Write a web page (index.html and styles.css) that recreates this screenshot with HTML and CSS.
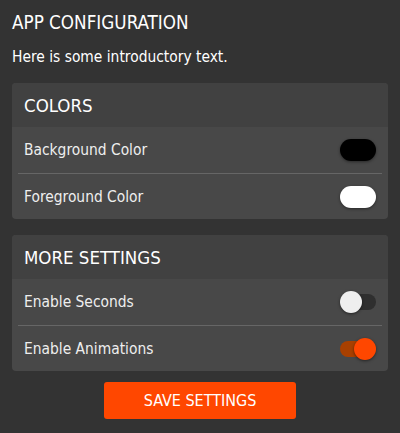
FILE: index.html
```html
<!DOCTYPE html>
<html>
<head>
<meta charset="utf-8">
<link rel="stylesheet" href="styles.css">
</head>
<body>
<div class="page">
  <h1 class="title">APP CONFIGURATION</h1>
  <p class="intro">Here is some introductory text.</p>

  <section class="card">
    <div class="card-head">COLORS</div>
    <div class="item">
      <span class="label">Background Color</span>
      <span class="swatch swatch-black"></span>
    </div>
    <div class="item">
      <span class="label">Foreground Color</span>
      <span class="swatch swatch-white"></span>
    </div>
  </section>

  <section class="card">
    <div class="card-head">MORE SETTINGS</div>
    <div class="item">
      <span class="label">Enable Seconds</span>
      <span class="toggle"><span class="knob"></span></span>
    </div>
    <div class="item">
      <span class="label">Enable Animations</span>
      <span class="toggle on"><span class="knob"></span></span>
    </div>
  </section>

  <div class="actions">
    <button class="save">SAVE SETTINGS</button>
  </div>
</div>
</body>
</html>
```
FILE: styles.css
```css
html, body {
  margin: 0;
  padding: 0;
  background: #333333;
}
body {
  font-family: "DejaVu Sans Condensed", "DejaVu Sans", sans-serif;
  color: #ffffff;
}
.page {
  padding: 11px 12px 0 12px;
  display: flex;
  flex-direction: column;
}
.title {
  margin: 0;
  font-size: 18.7px;
  font-weight: normal;
  line-height: 24px;
  color: #ffffff;
}
.intro {
  margin: 12px 0 0 0;
  font-size: 15.4px;
  line-height: 20px;
  color: #ffffff;
}
.card {
  margin-top: 16px;
  background: #484848;
  border-radius: 4px;
  overflow: hidden;
}
.card-head {
  background: #414141;
  height: 44px;
  padding: 0 12px;
  display: flex;
  align-items: center;
  font-size: 18.5px;
  color: #ffffff;
}
.item {
  height: 46px;
  box-sizing: border-box;
  margin: 0 6px;
  padding: 0 6px;
  display: flex;
  align-items: center;
  justify-content: space-between;
  font-size: 15.4px;
  color: #eeeeee;
}
.item + .item {
  border-top: 1px solid #666666;
}
.swatch {
  width: 36px;
  height: 22px;
  border-radius: 11px;
  box-shadow: 0 1px 3px rgba(0,0,0,0.45);
}
.swatch-black { background: #000000; }
.swatch-white { background: #ffffff; }
.toggle {
  position: relative;
  width: 36px;
  height: 16px;
  border-radius: 8px;
  background: #2f2f2f;
}
.toggle .knob {
  position: absolute;
  top: -3px;
  left: 0;
  width: 22px;
  height: 22px;
  border-radius: 50%;
  background: #eeeeee;
  box-shadow: 0 1px 3px rgba(0,0,0,0.5);
}
.toggle.on {
  background: #a84000;
}
.toggle.on .knob {
  left: 14px;
  background: #ff4700;
}
.actions {
  display: flex;
  justify-content: center;
  margin-top: 11px;
}
.save {
  width: 192px;
  height: 37px;
  border: none;
  border-radius: 3px;
  background: #ff4700;
  color: #ffffff;
  font-family: inherit;
  font-size: 16px;
  padding: 0;
}
```
